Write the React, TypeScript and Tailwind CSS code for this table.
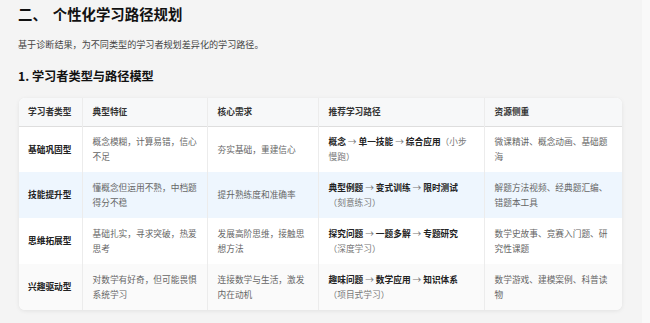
type Row = {
  type: string
  traits: string
  need: string
  path: string[]
  note: string
  res: string
  bg: string
}

const rows: Row[] = [
  {
    type: '基础巩固型',
    traits: '概念模糊，计算易错，信心不足',
    need: '夯实基础，重建信心',
    path: ['概念', '单一技能', '综合应用'],
    note: '（小步慢跑）',
    res: '微课精讲、概念动画、基础题海',
    bg: 'bg-white',
  },
  {
    type: '技能提升型',
    traits: '懂概念但运用不熟，中档题得分不稳',
    need: '提升熟练度和准确率',
    path: ['典型例题', '变式训练', '限时测试'],
    note: '（刻意练习）',
    res: '解题方法视频、经典题汇编、错题本工具',
    bg: 'bg-[#eef6fe]',
  },
  {
    type: '思维拓展型',
    traits: '基础扎实，寻求突破，热爱思考',
    need: '发展高阶思维，接触思想方法',
    path: ['探究问题', '一题多解', '专题研究'],
    note: '（深度学习）',
    res: '数学史故事、竞赛入门题、研究性课题',
    bg: 'bg-white',
  },
  {
    type: '兴趣驱动型',
    traits: '对数学有好奇，但可能畏惧系统学习',
    need: '连接数学与生活，激发内在动机',
    path: ['趣味问题', '数学应用', '知识体系'],
    note: '（项目式学习）',
    res: '数学游戏、建模案例、科普读物',
    bg: 'bg-[#fafafa]',
  },
]

const heads = ['学习者类型', '典型特征', '核心需求', '推荐学习路径', '资源侧重']

export default function App() {
  return (
    <div
      className="flex h-[323px] w-[650px] overflow-hidden bg-[#f4f4f4] text-[#222]"
      style={{ fontFamily: '"Noto Sans CJK SC", "Noto Sans", sans-serif' }}
    >
      <div className="flex-1 pl-[18px] pt-[4px]">
        <h2 className="text-[14.4px] font-bold leading-[20px] text-[#111]">
          二、<span className="ml-[6px]">个性化学习路径规划</span>
        </h2>
        <p className="mt-[13px] text-[9.1px] leading-[14px] text-[#444]">
          基于诊断结果，为不同类型的学习者规划差异化的学习路径。
        </p>
        <h3 className="mt-[16px] text-[12.2px] font-bold leading-[18px] text-[#111]">
          1. 学习者类型与路径模型
        </h3>

        <div className="mt-[13px] ml-px w-[603px] overflow-hidden rounded-md bg-white shadow-[0_1px_4px_rgba(0,0,0,0.08)]">
          <table className="w-full table-fixed border-collapse text-[8.7px] leading-[15.5px]">
            <colgroup>
              <col className="w-[63px]" />
              <col className="w-[125px]" />
              <col className="w-[111px]" />
              <col className="w-[166px]" />
              <col className="w-[138px]" />
            </colgroup>
            <thead>
              <tr className="h-[28px] border-b border-[#dedede] bg-[#f7f8f9]">
                {heads.map((h, i) => (
                  <th
                    key={h}
                    className={`text-left align-middle font-semibold whitespace-nowrap text-[#333] ${
                      i > 0 ? 'border-l border-[#ececec] pl-[10px] pr-[6px]' : 'pl-[9px] pr-[4px]'
                    }`}
                  >
                    {h}
                  </th>
                ))}
              </tr>
            </thead>
            <tbody>
              {rows.map((r) => (
                <tr key={r.type} className={`h-[46px] ${r.bg}`}>
                  <td className="pl-[9px] pr-[4px] align-middle font-bold whitespace-nowrap text-[#222]">{r.type}</td>
                  <td className="border-l border-[#ececec] pl-[10px] pr-[5px] align-middle text-[#666]">{r.traits}</td>
                  <td className="border-l border-[#ececec] pl-[10px] pr-[9px] align-middle text-[#666]">{r.need}</td>
                  <td className="border-l border-[#ececec] pl-[10px] pr-[10px] align-middle text-[#777]">
                    {r.path.map((p, i) => (
                      <span key={p}>
                        {i > 0 ? ' → ' : ''}
                        <b className="font-bold text-[#222]">{p}</b>
                      </span>
                    ))}
                    {r.note}
                  </td>
                  <td className="border-l border-[#ececec] pl-[10px] pr-[8px] align-middle text-[#666]">{r.res}</td>
                </tr>
              ))}
            </tbody>
          </table>
        </div>
      </div>
      <div className="w-[8px] bg-[#f9f9f9]" />
    </div>
  )
}
